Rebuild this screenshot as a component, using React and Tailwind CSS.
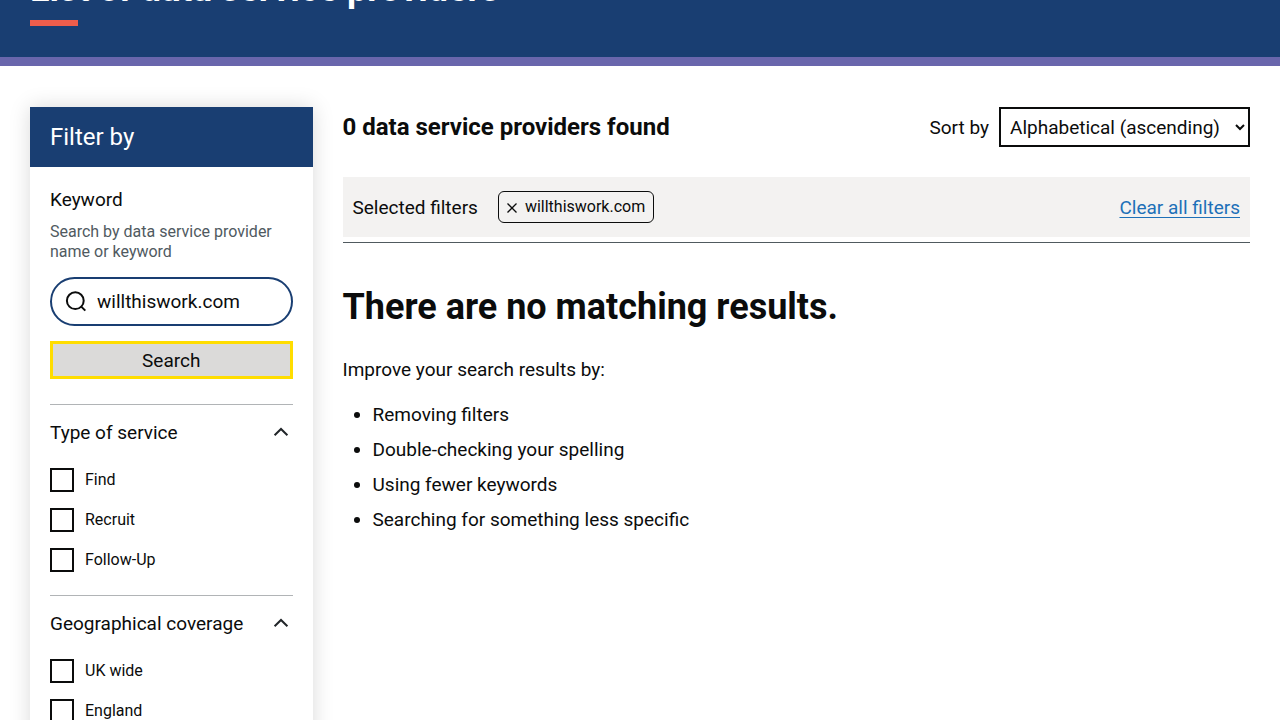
import { useState } from "react";

const groups = [
  { title: "Type of service", options: ["Find", "Recruit", "Follow-Up"] },
  { title: "Geographical coverage", options: ["UK wide", "England"] },
];

const tips = [
  "Removing filters",
  "Double-checking your spelling",
  "Using fewer keywords",
  "Searching for something less specific",
];

function SearchIcon() {
  return (
    <svg
      width="24"
      height="24"
      viewBox="0 0 24 24"
      fill="none"
      stroke="#0b0c0c"
      strokeWidth="2"
      className="shrink-0"
      aria-hidden="true"
    >
      <circle cx="11.3" cy="10.7" r="8.4" />
      <path d="M17 16.400l4.300 4.200" />
    </svg>
  );
}

function FilterGroup({ title, options }) {
  const [open, setOpen] = useState(true);
  return (
    <section className="border-t border-[#b1b4b6] pt-[15px] pb-[15px]">
      <button
        type="button"
        aria-expanded={open}
        onClick={() => setOpen(!open)}
        className="flex w-full items-center justify-between pr-1 text-left text-[19px] leading-[25px]"
      >
        {title}
        <svg
          width="16"
          height="16"
          viewBox="0 0 16 16"
          fill="none"
          stroke="#212529"
          strokeWidth="2"
          className={open ? "" : "rotate-180"}
          aria-hidden="true"
        >
          <path d="M1.600 10.200 8 4l6.400 6.200" />
        </svg>
      </button>
      {open && (
        <div className="mt-[15px]">
          {options.map((name) => (
            <label key={name} className="flex h-10 items-center gap-[11px] text-base leading-5">
              <input
                type="checkbox"
                className="size-6 shrink-0 appearance-none border-2 border-[#0b0c0c] bg-white checked:bg-[#0b0c0c] checked:shadow-[inset_0_0_0_4px_white]"
              />
              {name}
            </label>
          ))}
        </div>
      )}
    </section>
  );
}

function FilterPanel() {
  return (
    <aside className="bg-white shadow-[0_0_20px_rgba(0,0,0,0.15)]">
      <h2 className="bg-[#193e72] px-5 py-[15px] text-2xl leading-[30px] text-white">Filter by</h2>
      <form className="px-5 pt-5" onSubmit={(e) => e.preventDefault()}>
        <label htmlFor="keyword" className="block text-[19px] leading-[25px]">
          Keyword
        </label>
        <p id="keyword-hint" className="mt-[10px] leading-5 text-[#505a5f]">
          Search by data service provider name or keyword
        </p>
        <div className="mt-[15px] flex h-[49px] items-center gap-[9px] rounded-full border-2 border-[#193e72] pr-4 pl-3">
          <SearchIcon />
          <input
            id="keyword"
            type="text"
            aria-describedby="keyword-hint"
            defaultValue="willthiswork.com"
            className="w-full min-w-0 bg-transparent text-[19px] leading-[25px] outline-none"
          />
        </div>
        <button
          type="submit"
          className="mt-[15px] mb-[25px] block h-[38px] w-full border-[3px] border-[#ffdd00] bg-[#dbdad9] text-[19px] leading-[25px]"
        >
          Search
        </button>
        {groups.map((g) => (
          <FilterGroup key={g.title} {...g} />
        ))}
      </form>
    </aside>
  );
}

function Results() {
  return (
    <main className="col-span-3">
      <div className="flex items-center justify-between">
        <h2 className="text-2xl leading-[30px] font-bold">0 data service providers found</h2>
        <div className="flex items-center gap-[10px] text-[19px] leading-[25px]">
          <label htmlFor="sort">Sort by</label>
          <select id="sort" className="h-10 w-[251px] border-2 border-[#0b0c0c] bg-white p-[5px]">
            <option>Alphabetical (ascending)</option>
            <option>Alphabetical (descending)</option>
          </select>
        </div>
      </div>

      <div className="mt-[30px] border-b border-[#505a5f] pb-[5px]">
        <div className="flex h-[60px] items-center bg-[#f3f2f1] px-[10px] text-[19px] leading-[25px]">
          <span>Selected filters</span>
          <button
            type="button"
            aria-label="Remove filter willthiswork.com"
            className="ml-5 flex h-8 items-center gap-2 rounded-md border border-[#0b0c0c] px-2 text-base leading-5"
          >
            <svg
              width="10"
              height="12"
              viewBox="0 0 10 12"
              stroke="#0b0c0c"
              strokeWidth="1.3"
              aria-hidden="true"
            >
              <path d="M.5 2.500l9 9M9.500 2.500l-9 9" />
            </svg>
            willthiswork.com
          </button>
          <a
            href="#clear"
            className="ml-auto text-[#1d70b8] underline decoration-1 underline-offset-[3px]"
          >
            Clear all filters
          </a>
        </div>
      </div>

      <h3 className="mt-10 text-4xl leading-[48px] font-bold">There are no matching results.</h3>
      <p className="mt-[26px] text-[19px] leading-[25px]">Improve your search results by:</p>
      <ul className="mt-5 list-disc space-y-[10px] pl-[30px] text-[19px] leading-[25px]">
        {tips.map((tip) => (
          <li key={tip}>{tip}</li>
        ))}
      </ul>
    </main>
  );
}

export default function App() {
  return (
    <div className="h-screen overflow-hidden bg-white font-[Roboto,sans-serif] text-base text-[#0b0c0c]">
      <header className="-mt-9 border-b-9 border-[#6966ac] bg-[#193e72] px-[30px] pb-[31px]">
        <h1 className="text-4xl leading-[50px] font-bold text-white">
          List of data service providers
        </h1>
        <div className="mt-[6px] h-[6px] w-12 bg-[#ee5d4b]" />
      </header>
      <div className="grid grid-cols-4 gap-[30px] px-[30px] pt-[41px]">
        <FilterPanel />
        <Results />
      </div>
    </div>
  );
}
